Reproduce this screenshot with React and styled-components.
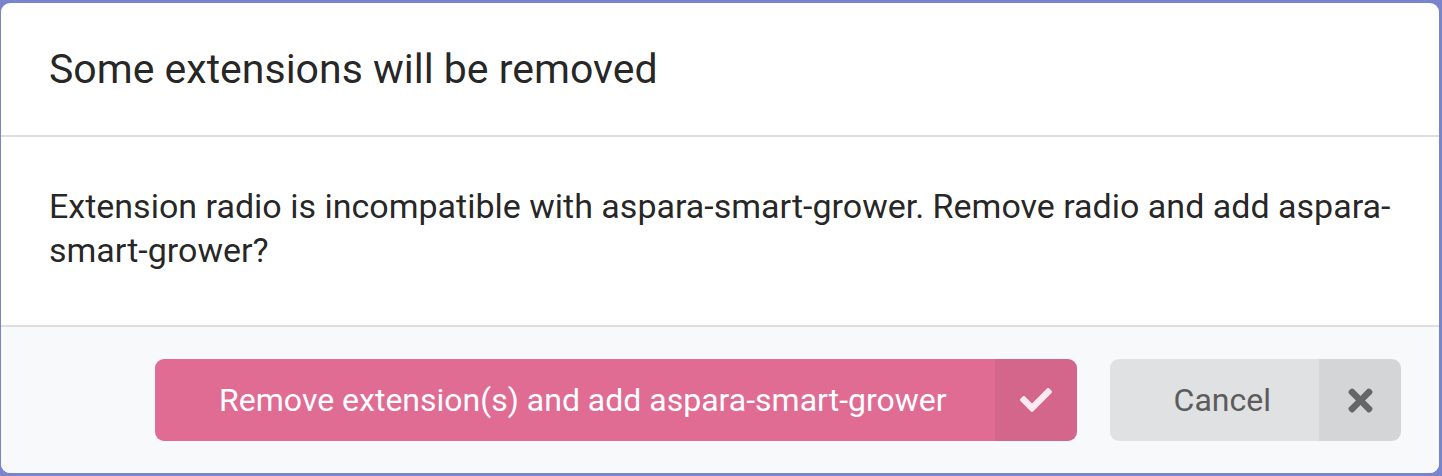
import React from "react";
import styled, { createGlobalStyle } from "styled-components";
import { FaCheck, FaTimes } from "react-icons/fa";

const GlobalStyle = createGlobalStyle`
  html, body {
    margin: 0;
    padding: 0;
    background: #7884cc;
    font-family: Roboto, "Liberation Sans", Arial, sans-serif;
  }
`;

const Backdrop = styled.div`
  width: 1442px;
  height: 476px;
  box-sizing: border-box;
  padding: 3px 3px 3px 1px;
  background: #7884cc;
`;

const Modal = styled.div`
  height: 100%;
  display: flex;
  flex-direction: column;
  background: #fff;
  border-radius: 9px;
  overflow: hidden;
`;

const Header = styled.div`
  height: 132px;
  display: flex;
  align-items: center;
  padding: 0 48px;
  font-size: 41px;
  color: rgba(0, 0, 0, 0.87);
  border-bottom: 2px solid #dedede;
`;

const Content = styled.div`
  padding: 47px 48px 0;
  height: 188px;
  box-sizing: border-box;
  font-size: 34px;
  line-height: 44px;
  color: rgba(0, 0, 0, 0.87);
`;

const Actions = styled.div`
  flex: 1;
  display: flex;
  justify-content: flex-end;
  align-items: center;
  gap: 33px;
  padding: 0 38px 0 0;
  background: #f8f9fb;
  border-top: 2px solid #dedede;
`;

const Button = styled.button`
  display: flex;
  align-items: stretch;
  height: 82px;
  padding: 0;
  border: none;
  border-radius: 9px;
  overflow: hidden;
  background: ${(p) => (p.$primary ? "#e06b93" : "#e0e1e2")};
  color: ${(p) => (p.$primary ? "#fff" : "#5c5c5c")};
  font-family: inherit;
  font-size: 32px;
  cursor: pointer;
`;

const Label = styled.span`
  display: flex;
  align-items: center;
  padding: 0 48px 0 64px;
`;

const IconBox = styled.span`
  width: 82px;
  display: flex;
  align-items: center;
  justify-content: center;
  background: rgba(0, 0, 0, 0.05);
  color: ${(p) => (p.$primary ? "#fde9f0" : "#666")};
  font-size: ${(p) => (p.$primary ? "32px" : "35px")};
`;

export default function App() {
  return (
    <>
      <GlobalStyle />
      <Backdrop>
        <Modal>
          <Header>Some extensions will be removed</Header>
          <Content>
            Extension radio is incompatible with aspara-smart-grower. Remove
            radio and add aspara-smart-grower?
          </Content>
          <Actions>
            <Button $primary>
              <Label>Remove extension(s) and add aspara-smart-grower</Label>
              <IconBox $primary>
                <FaCheck />
              </IconBox>
            </Button>
            <Button>
              <Label>Cancel</Label>
              <IconBox>
                <FaTimes />
              </IconBox>
            </Button>
          </Actions>
        </Modal>
      </Backdrop>
    </>
  );
}
